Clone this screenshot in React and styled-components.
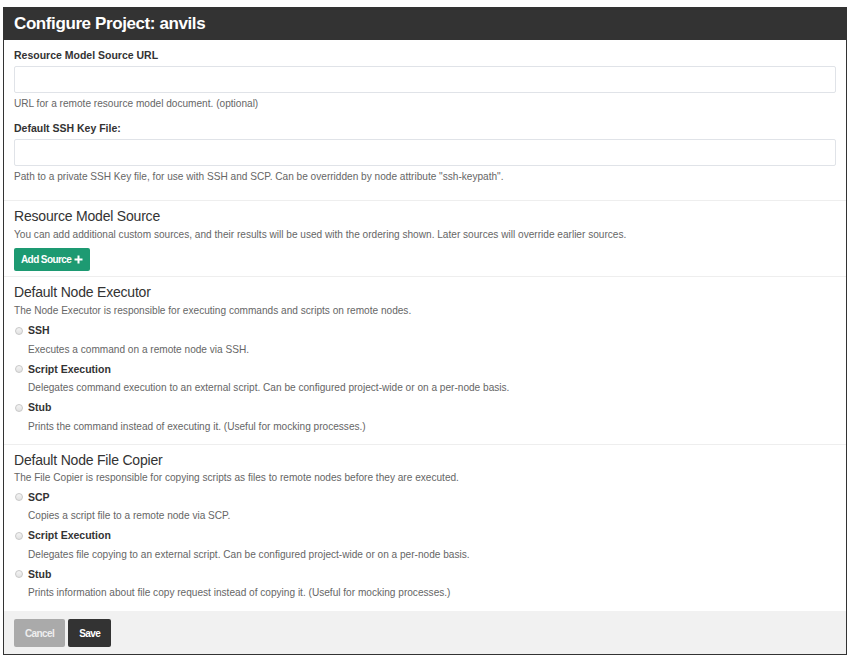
import React from 'react'
import styled, { createGlobalStyle } from 'styled-components'

const GlobalStyle = createGlobalStyle`
  html, body {
    margin: 0;
    padding: 0;
    background: #fff;
    font-family: "Liberation Sans", Arial, sans-serif;
    color: #333;
  }
`

const Page = styled.div`
  padding: 7px 1px 4px 3px;
`

const Panel = styled.div`
  width: 844px;
  box-sizing: border-box;
  border: 1px solid #333;
  border-top: none;
`

const Header = styled.div`
  height: 33px;
  background: #333;
  color: #fff;
  font-size: 17px;
  font-weight: bold;
  line-height: 33px;
  padding: 0 10px;
  letter-spacing: -0.4px;
`

const Section = styled.div`
  padding: ${({ $top }) => $top || 5}px 10px ${({ $bottom }) => $bottom || 12}px;
  border-bottom: ${({ $last }) => ($last ? 'none' : '1px solid #eee')};
`

const Group = styled.div`
  margin-bottom: ${({ $mb }) => $mb || 0}px;
`

const Label = styled.div`
  font-size: 10.5px;
  font-weight: bold;
  line-height: 15px;
  margin-bottom: 3px;
`

const Input = styled.input`
  display: block;
  width: 100%;
  height: 27px;
  box-sizing: border-box;
  border: 1px solid #e0e3e8;
  border-radius: 2px;
  background: #fff;
  outline: none;
  font-family: inherit;
`

const Help = styled.div`
  font-size: 10.1px;
  line-height: 14px;
  color: #666;
  margin-top: ${({ $mt }) => $mt ?? 4}px;
  padding-left: ${({ $indent }) => ($indent ? 14 : 0)}px;
`

const Title = styled.div`
  font-size: 14px;
  line-height: 18px;
  letter-spacing: -0.2px;
  color: #333;
`

const Button = styled.button`
  display: inline-flex;
  align-items: center;
  gap: 3px;
  height: ${({ $h }) => $h || 28}px;
  padding: 0 ${({ $px }) => $px || 11}px;
  border: none;
  border-radius: 2px;
  background: ${({ $bg }) => $bg};
  color: ${({ $fg }) => $fg || '#fff'};
  font-family: inherit;
  font-size: 10px;
  font-weight: bold;
  letter-spacing: -0.6px;
  cursor: pointer;
`

const ButtonRow = styled.div`
  display: flex;
  margin-top: 6px;
`

const Option = styled.div`
  margin-top: 5px;
`

const OptionRow = styled.label`
  display: flex;
  align-items: center;
  gap: 5px;
  font-size: 10.5px;
  font-weight: bold;
  line-height: 15px;
`

const Radio = styled.span`
  width: 6px;
  height: 6px;
  margin-left: 1px;
  border-radius: 50%;
  border: 1px solid #c8c8c8;
  background: linear-gradient(#f4f4f4, #e2e2e2);
`

const Footer = styled.div`
  display: flex;
  gap: 3px;
  padding: 8px 10px 7px;
  background: #f1f1f1;
`

const executors = [
  ['SSH', 'Executes a command on a remote node via SSH.'],
  ['Script Execution', 'Delegates command execution to an external script. Can be configured project-wide or on a per-node basis.'],
  ['Stub', 'Prints the command instead of executing it. (Useful for mocking processes.)'],
]

const copiers = [
  ['SCP', 'Copies a script file to a remote node via SCP.'],
  ['Script Execution', 'Delegates file copying to an external script. Can be configured project-wide or on a per-node basis.'],
  ['Stub', 'Prints information about file copy request instead of copying it. (Useful for mocking processes.)'],
]

function Options({ items }) {
  return items.map(([name, desc]) => (
    <Option key={name}>
      <OptionRow>
        <Radio />
        {name}
      </OptionRow>
      <Help $indent $mt={4.5}>{desc}</Help>
    </Option>
  ))
}

export default function App() {
  return (
    <Page>
      <GlobalStyle />
      <Panel>
        <Header>Configure Project: anvils</Header>

        <Section $top={8} $bottom={16}>
          <Group $mb={10}>
            <Label>Resource Model Source URL</Label>
            <Input />
            <Help>URL for a remote resource model document. (optional)</Help>
          </Group>
          <Group>
            <Label>Default SSH Key File:</Label>
            <Input />
            <Help>Path to a private SSH Key file, for use with SSH and SCP. Can be overridden by node attribute "ssh-keypath".</Help>
          </Group>
        </Section>

        <Section $top={6} $bottom={5}>
          <Title>Resource Model Source</Title>
          <Help $mt={3}>You can add additional custom sources, and their results will be used with the ordering shown. Later sources will override earlier sources.</Help>
          <ButtonRow>
            <Button $bg="#1d9a72" $h={23} $px={7}>
              Add Source
              <svg width="9" height="9" viewBox="0 0 9 9">
                <path d="M4.5 0.5v8M0.5 4.5h8" stroke="#fff" strokeWidth="2" />
              </svg>
            </Button>
          </ButtonRow>
        </Section>

        <Section $top={6} $bottom={10}>
          <Title>Default Node Executor</Title>
          <Help $mt={3}>The Node Executor is responsible for executing commands and scripts on remote nodes.</Help>
          <Options items={executors} />
        </Section>

        <Section $top={6} $bottom={11} $last>
          <Title>Default Node File Copier</Title>
          <Help $mt={2}>The File Copier is responsible for copying scripts as files to remote nodes before they are executed.</Help>
          <Options items={copiers} />
        </Section>

        <Footer>
          <Button $bg="#aaa" $fg="#eee">Cancel</Button>
          <Button $bg="#333">Save</Button>
        </Footer>
      </Panel>
    </Page>
  )
}
